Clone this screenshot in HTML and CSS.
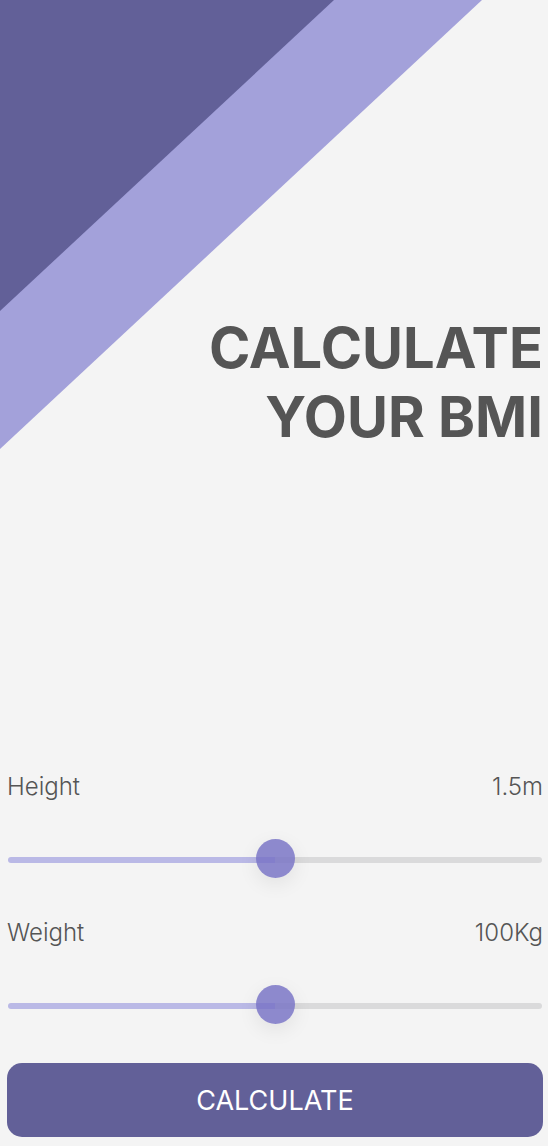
FILE: index.html
```html
<!DOCTYPE html>
<html lang="en">
<head>
<meta charset="utf-8">
<meta name="viewport" content="width=device-width, initial-scale=1">
<title>BMI Calculator</title>
<link rel="stylesheet" href="styles.css">
</head>
<body>
<main class="screen">
  <svg class="backdrop" viewBox="0 0 548 450" aria-hidden="true">
    <path fill="#a3a1da" d="M0 0H482L0 449Z"/>
    <path fill="#626098" d="M0 0H334L0 311Z"/>
  </svg>
  <h1 class="title">CALCULATE<br>YOUR BMI</h1>
  <form class="form">
    <div class="field">
      <div class="field-head">
        <label for="height">Height</label>
        <output for="height">1.5m</output>
      </div>
      <input class="slider" id="height" type="range" min="0" max="3" step="0.1" value="1.5">
    </div>
    <div class="field">
      <div class="field-head">
        <label for="weight">Weight</label>
        <output for="weight">100Kg</output>
      </div>
      <input class="slider" id="weight" type="range" min="0" max="200" value="100">
    </div>
    <button class="submit" type="button">CALCULATE</button>
  </form>
</main>
</body>
</html>
```
FILE: styles.css
```css
* {
  box-sizing: border-box;
}

body {
  margin: 0;
  background: #f4f4f4;
  color: #555;
  font-family: Inter, "Liberation Sans", sans-serif;
}

.screen {
  position: relative;
  display: flex;
  flex-direction: column;
  justify-content: space-between;
  min-height: 100vh;
  padding: 314px 5px 9px 7px;
}

.backdrop {
  position: absolute;
  top: 0;
  left: 0;
  width: 100%;
}

.title {
  position: relative;
  margin: 0;
  font-size: 56px;
  line-height: 69px;
  font-weight: 700;
  text-align: right;
}

.form {
  display: flex;
  flex-direction: column;
}

.field {
  display: flex;
  flex-direction: column;
  height: 146px;
}

.field:last-of-type {
  height: 147px;
}

.field-head {
  display: flex;
  justify-content: space-between;
  font-size: 24px;
  line-height: 34px;
  font-weight: 300;
}

.slider {
  appearance: none;
  width: 100%;
  height: 40px;
  margin: 36px 0 0;
  padding: 0 1px;
  background: none;
}

.slider::-webkit-slider-runnable-track {
  height: 6px;
  border-radius: 3px;
  background: linear-gradient(to right, #bab9e6 50%, #dadadb 50%);
}

.slider::-webkit-slider-thumb {
  appearance: none;
  width: 39px;
  height: 39px;
  margin-top: -18px;
  border-radius: 50%;
  background: rgba(118, 114, 197, 0.82);
  box-shadow: 0 6px 20px rgba(0, 0, 0, 0.08);
}

.submit {
  height: 74px;
  padding: 2px 0 0;
  border: 0;
  border-radius: 15px;
  background: #626098;
  color: #fff;
  font: 400 27px/34px Inter, "Liberation Sans", sans-serif;
}
```
